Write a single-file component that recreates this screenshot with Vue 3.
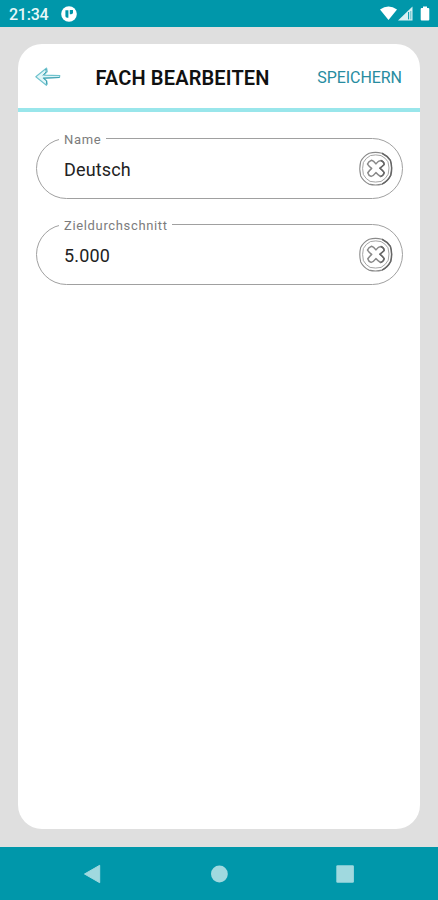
<script setup>
import { ref } from 'vue'

const fields = ref([
  { id: 'name', label: 'Name', value: 'Deutsch' },
  { id: 'target', label: 'Zieldurchschnitt', value: '5.000' }
])
</script>

<template>
  <div class="screen">
    <header class="status">
      <span class="clock">21:34</span>
      <svg class="notice" width="16" height="16" viewBox="0 0 16 16">
        <circle cx="8" cy="8" r="7.8" fill="#fff" />
        <path d="M4.4 4.2h3v7.6H6.2a1.8 1.8 0 0 1-1.8-1.8z" fill="#0097aa" />
        <path d="M8.8 4h3.2v2.4a1.8 1.8 0 0 1-1.8 1.8H8.8z" fill="#0097aa" />
      </svg>
      <svg class="signals" width="50" height="16" viewBox="0 0 50 16">
        <path d="M0 3.4Q8.5-2.4 17 3.4L8.5 14z" fill="#fff" />
        <path d="M18 14.4 32.5.5V14.4z" fill="#fff" fill-opacity=".85" />
        <path d="M28.6 6v7.4" stroke="#0097aa" stroke-width="1" />
        <path d="M30.8 5v8.4" stroke="#0097aa" stroke-width=".6" />
        <path d="M43 .5h4v1.6h1.3q1 0 1 1v10.4q0 1-1 1h-6.6q-1 0-1-1V3.1q0-1 1-1H43z" fill="#fff" />
      </svg>
    </header>

    <main class="body">
      <section class="card">
        <div class="toolbar">
          <svg class="back" width="28" height="22" viewBox="0 0 28 22">
            <path d="M12.6 2 1.8 10.7l10.6 8.6.9-1.4-.6-3.1-3.4-2.7 16.2-.6.3-1.9-15.9-.5 3.4-3.5z" fill="#e2f6f8" stroke="#70c3ce" stroke-width="1.1" stroke-linejoin="round" />
            <path d="m11.9 3.2.2 2.7-3.3 3.6M12.3 18.3l.3-3.3-3.1-2.8 15.9-.7" fill="none" stroke="#3599aa" stroke-width=".9" stroke-linejoin="round" />
          </svg>
          <h1 class="title">FACH BEARBEITEN</h1>
          <button class="save">SPEICHERN</button>
        </div>
        <div class="fields">
          <div v-for="field in fields" :key="field.id" class="field">
            <label class="label" :for="field.id">{{ field.label }}</label>
            <span :id="field.id" class="value">{{ field.value }}</span>
            <svg class="clear" width="36" height="36" viewBox="0 0 36 36" fill="none" stroke-linejoin="round">
              <path d="M11.2 2.2Q17.5.6 24 2.2q5 2.3 8.4 7.2 2.3 7.4.3 15-3 5.800-8.600 8.700-6.600 1.700-13.200 0-5.300-2.700-8.200-8.200-1.800-7.400 0-14.500 3-5.500 8.500-8.200z" stroke="#8a8a8a" stroke-width="1.1" />
              <path d="M12.400 4.600q5.400-1.400 10.600 0 4.400 2 7 6.200 1.900 6.100.2 12.400-2.400 4.700-7.100 7.200-5.500 1.300-11 0-4.300-2.300-6.700-6.800-1.600-6.200 0-12.200 2.500-4.600 7-6.800z" stroke="#999" stroke-width=".9" />
              <path d="M24 2.200q5 2.300 8.400 7.200 2.300 7.400.3 15-3 5.800-8.600 8.700" stroke="#666" stroke-width="1.500" />
              <path d="M13.600 9.200q2 .4 4.300 3.700 2.500-3.400 4.900-3.400 3.200 1 3.400 4-2.200 2-4.300 3.700 2.800 2.200 4.300 4.400-.6 2.900-3.700 3.900-2.200-1.100-4.600-3.900-2.300 3.100-4.800 3.800-2.700-1-3.300-3.600 1.600-2.300 3.900-4.400-2.800-2.100-4.200-4.300 1-2.900 4.100-3.900z" stroke="#888" stroke-width="1.500" />
              <path d="M22.800 9.500q3.200 1 3.400 4-2.200 2-4.300 3.700 2.800 2.200 4.300 4.400-.6 2.900-3.700 3.900" stroke="#666" stroke-width="1.400" />
            </svg>
          </div>
        </div>
      </section>
    </main>

    <nav class="navigation">
      <svg width="18" height="20" viewBox="0 0 18 20"><path d="M.5 10 15.7 1.300v17.400z" fill="#a0d9df" stroke="#a0d9df" stroke-linejoin="round" /></svg>
      <svg width="18" height="18" viewBox="0 0 18 18"><circle cx="9.400" cy="9" r="8.400" fill="#a0d9df" /></svg>
      <svg width="18" height="18" viewBox="0 0 18 18"><rect x=".3" y=".2" width="17.600" height="17.600" rx="1.300" fill="#a0d9df" /></svg>
    </nav>
  </div>
</template>

<style>
body {
  margin: 0;
}
</style>

<style scoped>
.screen {
  display: flex;
  flex-direction: column;
  width: 438px;
  height: 900px;
  background: #dfdfdf;
  font-family: Roboto, "Liberation Sans", sans-serif;
}
.status {
  display: flex;
  align-items: center;
  box-sizing: border-box;
  height: 27px;
  padding: 1px 8px 0 9px;
  background: #0097aa;
  color: #e8f7f8;
}
.clock {
  width: 51.5px;
  padding-top: 1px;
  font-size: 16px;
  font-weight: 500;
  line-height: 25px;
  letter-spacing: -0.25px;
}
.signals {
  margin-left: auto;
}
.body {
  flex: 1;
  display: flex;
  padding: 17px 18px 18px;
}
.card {
  flex: 1;
  border-radius: 24px;
  background: #fff;
  overflow: hidden;
}
.toolbar {
  display: flex;
  align-items: center;
  box-sizing: border-box;
  height: 68px;
  padding: 1px 18px 0 16px;
  border-bottom: 4px solid #99e6eb;
}
.back {
  margin-top: 1px;
}
.title {
  margin: 2px 0 0 33.5px;
  color: #111;
  font-size: 20px;
  font-weight: 600;
  line-height: 24px;
  letter-spacing: 0.15px;
  white-space: nowrap;
}
.save {
  margin: 2px 0 0 auto;
  padding: 0;
  border: 0;
  background: none;
  color: #278ca0;
  font: 400 16px/24px Roboto, "Liberation Sans", sans-serif;
  letter-spacing: -0.05px;
}
.fields {
  display: flex;
  flex-direction: column;
  gap: 25px;
  padding: 26px 17.5px 26px 18px;
}
.field {
  position: relative;
  display: flex;
  align-items: center;
  justify-content: space-between;
  box-sizing: border-box;
  height: 61px;
  padding: 0 8px 0 27px;
  border: 1px solid #a0a0a0;
  border-radius: 31px;
}
.label {
  position: absolute;
  top: -8px;
  left: 22px;
  padding: 0 4.5px 0 5px;
  background: #fff;
  color: #7c7c7c;
  font-size: 13px;
  line-height: 17px;
  letter-spacing: 0.65px;
}
.value {
  margin-top: 2px;
  color: #222;
  font-size: 18px;
  line-height: 24px;
  letter-spacing: 0.15px;
}
.navigation {
  display: grid;
  grid-template-columns: repeat(3, 126px);
  justify-content: center;
  align-items: center;
  justify-items: center;
  height: 53px;
  background: #0097aa;
}
</style>
